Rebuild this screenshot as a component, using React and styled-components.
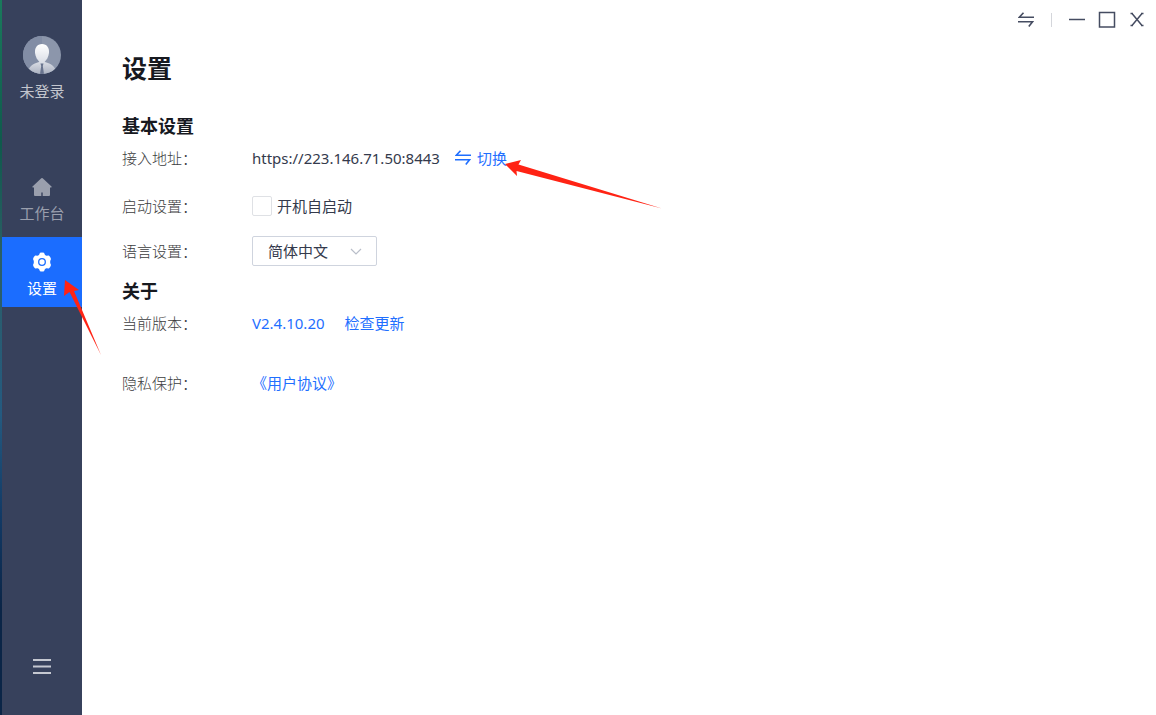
import React, { useState } from "react"
import styled, { createGlobalStyle } from "styled-components"

const GlobalStyle = createGlobalStyle`
  * {
    box-sizing: border-box;
  }
  body {
    margin: 0;
    font-family: "Noto Sans", "Noto Sans CJK SC", sans-serif;
    font-size: 15px;
    line-height: 20px;
    color: #343a4c;
  }
  button, select, input {
    font: inherit;
    color: inherit;
  }
  button {
    padding: 0;
    border: 0;
    background: none;
    cursor: pointer;
  }
  h1, h2, p {
    margin: 0;
  }
`

const Shell = styled.div`
  display: flex;
  min-height: 100vh;
  padding-left: 2px;
  background: linear-gradient(#1a7a5c, #0f5a4c 20%, #2c5f66 36%, #245a80 58%, #123a66 72%, #0b2547 85%);
`

const Sidebar = styled.aside`
  width: 80px;
  flex-shrink: 0;
  display: flex;
  flex-direction: column;
  align-items: center;
  padding: 36px 0 39px;
  background: #37415c;
`

const User = styled.button`
  display: flex;
  flex-direction: column;
  align-items: center;
  gap: 7px;
  margin-bottom: 61px;
  color: #c3c6ce;
`

const Nav = styled.nav`
  width: 100%;
  flex: 1;
  display: flex;
  flex-direction: column;
  gap: 5px;
`

const NavItem = styled.a`
  position: relative;
  height: 70px;
  display: flex;
  flex-direction: column;
  align-items: center;
  gap: 6px;
  padding-top: 15px;
  text-decoration: none;
  color: ${(props) => (props.$active ? "#fff" : "#9a9fad")};
  background: ${(props) => (props.$active ? "#1b6dff" : "transparent")};
`

const MenuButton = styled.button`
  height: 18px;
  color: #c5c8d1;
`

const Icon = styled.svg`
  display: block;
  flex-shrink: 0;
`

const Main = styled.main`
  flex: 1;
  min-width: 0;
  background: #fff;
`

const TitleBar = styled.div`
  height: 40px;
  display: flex;
  justify-content: flex-end;
  align-items: center;
  gap: 10px;
  padding-right: 9px;
  color: #454c61;
`

const WindowButton = styled.button`
  width: 20px;
  height: 20px;
`

const Divider = styled.span`
  width: 1px;
  height: 14px;
  margin: 0 5px 0 7px;
  background: #d4d6db;
`

const Content = styled.div`
  padding: 8px 40px;
`

const Title = styled.h1`
  font-size: 25px;
  line-height: 40px;
  color: #17191f;
`

const Section = styled.section`
  margin-top: ${(props) => props.$space}px;
`

const SectionTitle = styled.h2`
  font-size: 18px;
  line-height: 24px;
  color: #17191f;
`

const Row = styled.div`
  display: flex;
  align-items: center;
  height: 40px;
  margin-top: ${(props) => props.$space || 0}px;
`

const Label = styled.label`
  width: 130px;
  flex-shrink: 0;
  font-weight: 300;
  color: #3c3d40;
`

const Link = styled.a`
  position: relative;
  display: flex;
  align-items: center;
  gap: 6px;
  margin-left: ${(props) => props.$space || 0}px;
  color: #1f6fff;
  text-decoration: none;
`

const Checkbox = styled.input`
  appearance: none;
  width: 20px;
  height: 20px;
  margin: 0 5px 0 0;
  border: 1px solid #dfe1e5;
  border-radius: 2px;
  background: #fff;
  &:checked {
    background: #1b6dff;
  }
`

const SelectBox = styled.div`
  position: relative;
  width: 125px;
  height: 30px;
`

const Select = styled.select`
  appearance: none;
  width: 100%;
  height: 100%;
  padding: 0 30px 0 15px;
  border: 1px solid #cfd4de;
  border-radius: 2px;
  background: #fff;
`

const Chevron = styled(Icon)`
  position: absolute;
  top: 10px;
  right: 15px;
  pointer-events: none;
`

const LinkArrow = styled(Icon)`
  position: absolute;
  top: 10px;
  left: 50px;
  pointer-events: none;
`

const NavArrow = styled(Icon)`
  position: absolute;
  top: 43px;
  left: 60px;
  z-index: 1;
  pointer-events: none;
`

function SwapIcon() {
  return (
    <Icon width="16" height="16" viewBox="0 0 16 16" fill="none" stroke="currentColor" strokeWidth="1.600">
      <path d="M5.500.8 1.300 5.300H16M0 9.800h14.500L10.800 14.500" />
    </Icon>
  )
}

function Avatar() {
  return (
    <Icon width="38" height="38" viewBox="0 0 38 38">
      <defs>
        <clipPath id="avatar">
          <circle cx="19" cy="19" r="19" />
        </clipPath>
        <linearGradient id="person" x2="0" y2="1">
          <stop offset="0" stopColor="#fff" />
          <stop offset="1" stopColor="#d7dbe4" />
        </linearGradient>
        <linearGradient id="coat" x2="0" y2="1">
          <stop offset="0" stopColor="#d9dce4" />
          <stop offset="1" stopColor="#aab1c0" />
        </linearGradient>
      </defs>
      <g clipPath="url(#avatar)">
        <path fill="#8c96ab" d="M0 0h38v38H0z" />
        <path fill="#828da5" d="M0 0h19v38H0z" />
        <path fill="url(#coat)" d="M5 38c0-8 5-10 11-12h6c6 2 11 4 11 12z" />
        <path fill="url(#person)" d="M19 8c5 0 7.500 4 7 9-.5 4-2.500 7-4 8.500L19 28l-3-2.500c-1.500-1.500-3.500-4.500-4-8.500-.5-5 2-9 7-9z" />
        <path fill="#69748e" d="m17.500 27.500h3l-.7 2.500 1.200 8h-4l1.200-8z" />
      </g>
    </Icon>
  )
}

function App() {
  const [autoStart, setAutoStart] = useState(false)
  const [language, setLanguage] = useState("zh-CN")

  return (
    <Shell>
      <GlobalStyle />
      <Sidebar>
        <User>
          <Avatar />
          未登录
        </User>
        <Nav>
          <NavItem href="#workspace">
            <Icon width="20" height="20" viewBox="0 0 20 20" fill="currentColor">
              <path d="M9.300 1.300q.7-.6 1.400 0l8.800 8.200q.6.8-.4 1H18V18q0 1-1 1H10.700v-3.500H9.300V19H3q-1 0-1-1v-7.500H.9q-1-.2-.4-1z" />
            </Icon>
            工作台
          </NavItem>
          <NavItem href="#settings" $active>
            <Icon width="20" height="20" viewBox="0 0 20 20">
              <path
                fill="currentColor"
                d="M8 .8q2-.8 4 0l1 2.200 1.400.8 2.400-.2q1.700 1.300 2.200 3.500L18.200 9v2l.8 1.900q-.5 2.200-2.200 3.500l-2.400-.2-1.400.8-1 2.200q-2 .8-4 0L7 17l-1.400-.8-2.400.2Q1.500 15.100 1 12.900L1.800 11V9L1 7.100q.5-2.200 2.200-3.500l2.400.2L7 3z"
              />
              <circle cx="10" cy="10" r="3.300" fill="none" stroke="#1b6dff" strokeWidth="1.300" />
            </Icon>
            设置
            <NavArrow width="40" height="76" viewBox="0 0 40 76">
              <path fill="#ff2314" d="M3 0 17 10l-5 1 27 64L7.500 12 2 16z" />
            </NavArrow>
          </NavItem>
        </Nav>
        <MenuButton aria-label="菜单">
          <Icon width="18" height="18" viewBox="0 0 18 18" stroke="currentColor" strokeWidth="2">
            <path d="M0 2h18M0 8.500h18M0 15h18" />
          </Icon>
        </MenuButton>
      </Sidebar>
      <Main>
        <TitleBar>
          <SwapIcon />
          <Divider />
          <WindowButton aria-label="最小化">
            <Icon width="20" height="20" viewBox="0 0 20 20" stroke="currentColor" strokeWidth="1.500">
              <path d="M2 9.500h16" />
            </Icon>
          </WindowButton>
          <WindowButton aria-label="最大化">
            <Icon width="20" height="20" viewBox="0 0 20 20" fill="none" stroke="currentColor" strokeWidth="1.500">
              <path d="M2.500 2.500h15v14.500h-15z" />
            </Icon>
          </WindowButton>
          <WindowButton aria-label="关闭">
            <Icon width="20" height="20" viewBox="0 0 20 20" fill="none" stroke="currentColor" strokeWidth="1.500">
              <path d="M5 3.500 15 15.500M15 3.500 5 15.500M3.500 3.500H6M14 3.500h2.500M3.500 15.500H6M14 15.500h2.500" />
            </Icon>
          </WindowButton>
        </TitleBar>
        <Content>
          <Title>设置</Title>
          <Section $space={26}>
            <SectionTitle>基本设置</SectionTitle>
            <Row>
              <Label as="span">接入地址：</Label>
              <span>https://223.146.71.50:8443</span>
              <Link href="#switch" $space={15}>
                <SwapIcon />
                切换
                <LinkArrow width="160" height="60" viewBox="0 0 160 60">
                  <path fill="#ff2314" d="M0 6 16 2l-2.500 4.500L157 50.500 11.500 13l.5 5z" />
                </LinkArrow>
              </Link>
            </Row>
            <Row $space={8}>
              <Label as="span">启动设置：</Label>
              <Checkbox
                id="auto-start"
                type="checkbox"
                checked={autoStart}
                onChange={(e) => setAutoStart(e.target.checked)}
              />
              <label htmlFor="auto-start">开机自启动</label>
            </Row>
            <Row $space={5}>
              <Label htmlFor="language">语言设置：</Label>
              <SelectBox>
                <Select id="language" value={language} onChange={(e) => setLanguage(e.target.value)}>
                  <option value="zh-CN">简体中文</option>
                </Select>
                <Chevron width="12" height="12" viewBox="0 0 12 12" fill="none" stroke="#b9bec9" strokeWidth="1.200">
                  <path d="m1 3 5 5 5-5" />
                </Chevron>
              </SelectBox>
            </Row>
          </Section>
          <Section $space={8}>
            <SectionTitle>关于</SectionTitle>
            <Row>
              <Label as="span">当前版本：</Label>
              <Link href="#version">V2.4.10.20</Link>
              <Link href="#update" $space={20}>
                检查更新
              </Link>
            </Row>
            <Row $space={20}>
              <Label as="span">隐私保护：</Label>
              <Link href="#agreement">《用户协议》</Link>
            </Row>
          </Section>
        </Content>
      </Main>
    </Shell>
  )
}

export default App
